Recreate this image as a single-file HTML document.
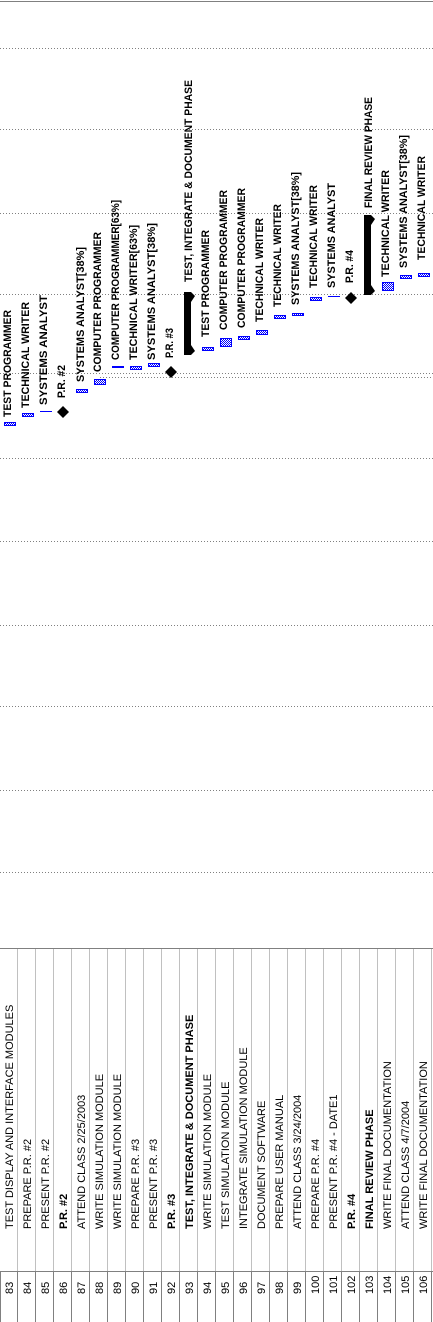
<!DOCTYPE html>
<html><head><meta charset="utf-8"><style>
html,body{margin:0;padding:0;background:#fff;}
svg{display:block;}
.l{font:bold 11px "Liberation Sans",Arial,sans-serif;fill:#000;}
.t{font:11px "Liberation Sans",Arial,sans-serif;fill:#000;}
.tb{font:bold 11px "Liberation Sans",Arial,sans-serif;fill:#000;}
.d{stroke:#808080;stroke-width:1;stroke-dasharray:1 2;}
</style></head><body>
<svg width="433" height="1322" viewBox="0 0 433 1322" xmlns="http://www.w3.org/2000/svg">
<defs>
<pattern id="ck" width="2" height="2" patternUnits="userSpaceOnUse"><rect width="2" height="2" fill="#fff"/><rect width="1" height="1" fill="#00f"/><rect x="1" y="1" width="1" height="1" fill="#00f"/></pattern>
</defs>
<line x1="0" y1="1.5" x2="433" y2="1.5" stroke="#808080"/>
<g class="d">
<line x1="0" y1="48.5" x2="433" y2="48.5"/>
<line x1="0" y1="129.5" x2="433" y2="129.5"/>
<line x1="0" y1="213.5" x2="433" y2="213.5"/>
<line x1="0" y1="294.5" x2="433" y2="294.5"/>
<line x1="0" y1="373.5" x2="433" y2="373.5"/>
<line x1="100" y1="377.5" x2="433" y2="377.5"/>
<line x1="0" y1="458.5" x2="433" y2="458.5"/>
<line x1="0" y1="541.5" x2="433" y2="541.5"/>
<line x1="0" y1="625.5" x2="433" y2="625.5"/>
<line x1="0" y1="706.5" x2="433" y2="706.5"/>
<line x1="0" y1="790.5" x2="433" y2="790.5"/>
<line x1="0" y1="872.5" x2="433" y2="872.5"/>
</g>
<g fill="url(#ck)" stroke="#00f" stroke-width="1">
<rect x="4.5" y="422.5" width="11" height="3"/>
<rect x="22.5" y="413.5" width="11" height="3"/>
<rect x="76.5" y="389.5" width="11" height="3"/>
<rect x="94.5" y="379.5" width="11" height="5"/>
<rect x="130.5" y="366.5" width="11" height="3"/>
<rect x="148.5" y="363.5" width="11" height="3"/>
<rect x="202.5" y="347.5" width="11" height="3"/>
<rect x="220.5" y="338.5" width="11" height="8"/>
<rect x="238.5" y="336.5" width="11" height="3"/>
<rect x="256.5" y="330.5" width="11" height="4"/>
<rect x="274.5" y="315.5" width="11" height="3"/>
<rect x="292.5" y="313.5" width="11" height="2"/>
<rect x="310.5" y="297.5" width="11" height="3"/>
<rect x="382.5" y="282.5" width="11" height="8"/>
<rect x="400.5" y="275.5" width="11" height="3"/>
<rect x="418.5" y="273.5" width="11" height="3"/>
</g>
<g fill="#00f">
<rect x="40" y="411" width="12" height="1"/>
<rect x="112" y="366" width="12" height="2"/>
<rect x="328" y="296" width="12" height="1"/>
</g>
<g fill="#000">
<polygon points="63,406 69,412 63,418 57,412"/>
<polygon points="171,366 177,372 171,378 165,372"/>
<polygon points="351,292 357,298 351,304 345,298"/>
<polygon points="184,292 191,292 195,296 191,302 191,345 195,351 191,355 184,355"/>
<polygon points="364,215 371,215 375,219 371,225 371,285 375,291 371,295 364,295"/>
</g>
<g class="l">
<text transform="translate(11,417) rotate(-90)" textLength="107" lengthAdjust="spacingAndGlyphs">TEST PROGRAMMER</text>
<text transform="translate(29,408) rotate(-90)" textLength="106" lengthAdjust="spacingAndGlyphs">TECHNICAL WRITER</text>
<text transform="translate(47,405) rotate(-90)" textLength="110" lengthAdjust="spacingAndGlyphs">SYSTEMS ANALYST</text>
<text transform="translate(65,398) rotate(-90)" textLength="33" lengthAdjust="spacingAndGlyphs">P.R. #2</text>
<text transform="translate(84,382) rotate(-90)" textLength="135" lengthAdjust="spacingAndGlyphs">SYSTEMS ANALYST[38%]</text>
<text transform="translate(101,372) rotate(-90)" textLength="140" lengthAdjust="spacingAndGlyphs">COMPUTER PROGRAMMER</text>
<text transform="translate(119,360) rotate(-90)" textLength="160" lengthAdjust="spacingAndGlyphs">COMPUTER PROGRAMMER[63%]</text>
<text transform="translate(137,360) rotate(-90)" textLength="135" lengthAdjust="spacingAndGlyphs">TECHNICAL WRITER[63%]</text>
<text transform="translate(155,360) rotate(-90)" textLength="137" lengthAdjust="spacingAndGlyphs">SYSTEMS ANALYST[38%]</text>
<text transform="translate(173,358) rotate(-90)" textLength="30" lengthAdjust="spacingAndGlyphs">P.R. #3</text>
<text transform="translate(192,282) rotate(-90)" textLength="202" lengthAdjust="spacingAndGlyphs">TEST, INTEGRATE &amp; DOCUMENT PHASE</text>
<text transform="translate(209,337) rotate(-90)" textLength="107" lengthAdjust="spacingAndGlyphs">TEST PROGRAMMER</text>
<text transform="translate(227,330) rotate(-90)" textLength="140" lengthAdjust="spacingAndGlyphs">COMPUTER PROGRAMMER</text>
<text transform="translate(245,328) rotate(-90)" textLength="140" lengthAdjust="spacingAndGlyphs">COMPUTER PROGRAMMER</text>
<text transform="translate(263,322) rotate(-90)" textLength="104" lengthAdjust="spacingAndGlyphs">TECHNICAL WRITER</text>
<text transform="translate(281,307) rotate(-90)" textLength="103" lengthAdjust="spacingAndGlyphs">TECHNICAL WRITER</text>
<text transform="translate(299,305) rotate(-90)" textLength="133" lengthAdjust="spacingAndGlyphs">SYSTEMS ANALYST[38%]</text>
<text transform="translate(317,288) rotate(-90)" textLength="103" lengthAdjust="spacingAndGlyphs">TECHNICAL WRITER</text>
<text transform="translate(335,288) rotate(-90)" textLength="105" lengthAdjust="spacingAndGlyphs">SYSTEMS ANALYST</text>
<text transform="translate(353,283) rotate(-90)" textLength="33" lengthAdjust="spacingAndGlyphs">P.R. #4</text>
<text transform="translate(372,208) rotate(-90)" textLength="111" lengthAdjust="spacingAndGlyphs">FINAL REVIEW PHASE</text>
<text transform="translate(389,277) rotate(-90)" textLength="107" lengthAdjust="spacingAndGlyphs">TECHNICAL WRITER</text>
<text transform="translate(407,268) rotate(-90)" textLength="133" lengthAdjust="spacingAndGlyphs">SYSTEMS ANALYST[38%]</text>
<text transform="translate(425,260) rotate(-90)" textLength="104" lengthAdjust="spacingAndGlyphs">TECHNICAL WRITER</text>
</g>
<line x1="0" y1="948.5" x2="433" y2="948.5" stroke="#808080"/>
<line x1="0" y1="1271.5" x2="433" y2="1271.5" stroke="#808080"/>
<line x1="0.5" y1="1272" x2="0.5" y2="1322" stroke="#808080"/>
<g stroke="#c0c0c0">
<line x1="17.5" y1="949" x2="17.5" y2="1271"/><line x1="35.5" y1="949" x2="35.5" y2="1271"/><line x1="53.5" y1="949" x2="53.5" y2="1271"/><line x1="71.5" y1="949" x2="71.5" y2="1271"/><line x1="89.5" y1="949" x2="89.5" y2="1271"/><line x1="107.5" y1="949" x2="107.5" y2="1271"/><line x1="125.5" y1="949" x2="125.5" y2="1271"/><line x1="143.5" y1="949" x2="143.5" y2="1271"/><line x1="161.5" y1="949" x2="161.5" y2="1271"/><line x1="179.5" y1="949" x2="179.5" y2="1271"/><line x1="197.5" y1="949" x2="197.5" y2="1271"/><line x1="215.5" y1="949" x2="215.5" y2="1271"/><line x1="233.5" y1="949" x2="233.5" y2="1271"/><line x1="251.5" y1="949" x2="251.5" y2="1271"/><line x1="269.5" y1="949" x2="269.5" y2="1271"/><line x1="287.5" y1="949" x2="287.5" y2="1271"/><line x1="305.5" y1="949" x2="305.5" y2="1271"/><line x1="323.5" y1="949" x2="323.5" y2="1271"/><line x1="341.5" y1="949" x2="341.5" y2="1271"/><line x1="359.5" y1="949" x2="359.5" y2="1271"/><line x1="377.5" y1="949" x2="377.5" y2="1271"/><line x1="395.5" y1="949" x2="395.5" y2="1271"/><line x1="413.5" y1="949" x2="413.5" y2="1271"/><line x1="431.5" y1="949" x2="431.5" y2="1271"/>
</g>
<g stroke="#808080">
<line x1="17.5" y1="1272" x2="17.5" y2="1322"/><line x1="35.5" y1="1272" x2="35.5" y2="1322"/><line x1="53.5" y1="1272" x2="53.5" y2="1322"/><line x1="71.5" y1="1272" x2="71.5" y2="1322"/><line x1="89.5" y1="1272" x2="89.5" y2="1322"/><line x1="107.5" y1="1272" x2="107.5" y2="1322"/><line x1="125.5" y1="1272" x2="125.5" y2="1322"/><line x1="143.5" y1="1272" x2="143.5" y2="1322"/><line x1="161.5" y1="1272" x2="161.5" y2="1322"/><line x1="179.5" y1="1272" x2="179.5" y2="1322"/><line x1="197.5" y1="1272" x2="197.5" y2="1322"/><line x1="215.5" y1="1272" x2="215.5" y2="1322"/><line x1="233.5" y1="1272" x2="233.5" y2="1322"/><line x1="251.5" y1="1272" x2="251.5" y2="1322"/><line x1="269.5" y1="1272" x2="269.5" y2="1322"/><line x1="287.5" y1="1272" x2="287.5" y2="1322"/><line x1="305.5" y1="1272" x2="305.5" y2="1322"/><line x1="323.5" y1="1272" x2="323.5" y2="1322"/><line x1="341.5" y1="1272" x2="341.5" y2="1322"/><line x1="359.5" y1="1272" x2="359.5" y2="1322"/><line x1="377.5" y1="1272" x2="377.5" y2="1322"/><line x1="395.5" y1="1272" x2="395.5" y2="1322"/><line x1="413.5" y1="1272" x2="413.5" y2="1322"/><line x1="431.5" y1="1272" x2="431.5" y2="1322"/>
</g>
<g class="t">
<text transform="translate(13,1229) rotate(-90)">TEST DISPLAY AND INTERFACE MODULES</text>
<text transform="translate(31,1229) rotate(-90)">PREPARE P.R. #2</text>
<text transform="translate(49,1229) rotate(-90)">PRESENT P.R. #2</text>
<text class="tb" transform="translate(67,1229) rotate(-90)">P.R. #2</text>
<text transform="translate(85,1229) rotate(-90)">ATTEND CLASS 2/25/2003</text>
<text transform="translate(103,1229) rotate(-90)">WRITE SIMULATION MODULE</text>
<text transform="translate(121,1229) rotate(-90)">WRITE SIMULATION MODULE</text>
<text transform="translate(139,1229) rotate(-90)">PREPARE P.R. #3</text>
<text transform="translate(157,1229) rotate(-90)">PRESENT P.R. #3</text>
<text class="tb" transform="translate(175,1229) rotate(-90)">P.R. #3</text>
<text class="tb" transform="translate(193,1229) rotate(-90)">TEST, INTEGRATE &amp; DOCUMENT PHASE</text>
<text transform="translate(211,1229) rotate(-90)">WRITE SIMULATION MODULE</text>
<text transform="translate(229,1229) rotate(-90)">TEST SIMULATION MODULE</text>
<text transform="translate(247,1229) rotate(-90)">INTEGRATE SIMULATION MODULE</text>
<text transform="translate(265,1229) rotate(-90)">DOCUMENT SOFTWARE</text>
<text transform="translate(283,1229) rotate(-90)">PREPARE USER MANUAL</text>
<text transform="translate(301,1229) rotate(-90)">ATTEND CLASS 3/24/2004</text>
<text transform="translate(319,1229) rotate(-90)">PREPARE P.R. #4</text>
<text transform="translate(337,1229) rotate(-90)">PRESENT P.R. #4 - DATE1</text>
<text class="tb" transform="translate(355,1229) rotate(-90)">P.R. #4</text>
<text class="tb" transform="translate(373,1229) rotate(-90)">FINAL REVIEW PHASE</text>
<text transform="translate(391,1229) rotate(-90)">WRITE FINAL DOCUMENTATION</text>
<text transform="translate(409,1229) rotate(-90)">ATTEND CLASS 4/7/2004</text>
<text transform="translate(427,1229) rotate(-90)">WRITE FINAL DOCUMENTATION</text>
</g>
<g class="t">
<text transform="translate(13,1294) rotate(-90)">83</text>
<text transform="translate(31,1294) rotate(-90)">84</text>
<text transform="translate(49,1294) rotate(-90)">85</text>
<text transform="translate(67,1294) rotate(-90)">86</text>
<text transform="translate(85,1294) rotate(-90)">87</text>
<text transform="translate(103,1294) rotate(-90)">88</text>
<text transform="translate(121,1294) rotate(-90)">89</text>
<text transform="translate(139,1294) rotate(-90)">90</text>
<text transform="translate(157,1294) rotate(-90)">91</text>
<text transform="translate(175,1294) rotate(-90)">92</text>
<text transform="translate(193,1294) rotate(-90)">93</text>
<text transform="translate(211,1294) rotate(-90)">94</text>
<text transform="translate(229,1294) rotate(-90)">95</text>
<text transform="translate(247,1294) rotate(-90)">96</text>
<text transform="translate(265,1294) rotate(-90)">97</text>
<text transform="translate(283,1294) rotate(-90)">98</text>
<text transform="translate(301,1294) rotate(-90)">99</text>
<text transform="translate(319,1294) rotate(-90)">100</text>
<text transform="translate(337,1294) rotate(-90)">101</text>
<text transform="translate(355,1294) rotate(-90)">102</text>
<text transform="translate(373,1294) rotate(-90)">103</text>
<text transform="translate(391,1294) rotate(-90)">104</text>
<text transform="translate(409,1294) rotate(-90)">105</text>
<text transform="translate(427,1294) rotate(-90)">106</text>
</g>
</svg>
</body></html>
